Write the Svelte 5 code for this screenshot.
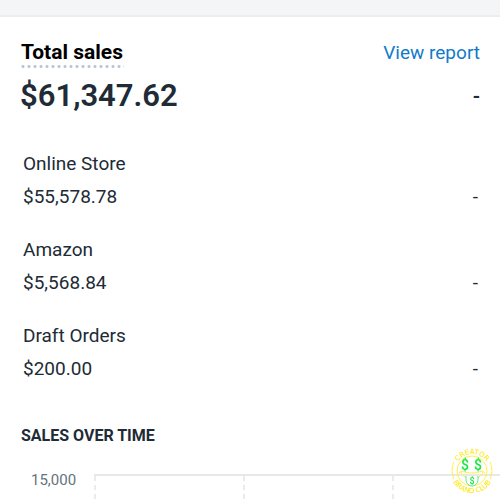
<script lang="ts">
  interface Channel {
    name: string;
    amount: string;
    change: string;
  }

  const total = '$61,347.62';

  const channels: Channel[] = [
    { name: 'Online Store', amount: '$55,578.78', change: '-' },
    { name: 'Amazon', amount: '$5,568.84', change: '-' },
    { name: 'Draft Orders', amount: '$200.00', change: '-' }
  ];
</script>

<div class="page">
  <main class="card">
    <header class="card-header">
      <h2>Total sales</h2>
      <a href="#report">View report</a>
    </header>

    <div class="total">
      <span>{total}</span>
      <span class="total-change">-</span>
    </div>

    <dl class="channels">
      {#each channels as channel (channel.name)}
        <div class="channel">
          <dt>{channel.name}</dt>
          <dd>
            <span>{channel.amount}</span>
            <span>{channel.change}</span>
          </dd>
        </div>
      {/each}
    </dl>

    <h3>Sales over time</h3>

    <div class="chart">
      <span class="axis-label">15,000</span>
      <div class="plot">
        <div class="column"></div>
        <div class="column"></div>
        <div class="column"></div>
      </div>
    </div>
  </main>

  <svg class="badge" viewBox="0 0 48 48" role="img" aria-label="Creator Brand Club">
    <defs>
      <path id="badge-top" d="M7 24a17 17 0 0 1 34 0" />
      <path id="badge-bottom" d="M2 24a22 22 0 0 0 44 0" />
    </defs>
    <g class="outline">
      <circle cx="24" cy="24" r="15" />
      <path d="M6 15a20 20 0 0 0 0 17M42 15a20 20 0 0 1 0 17" />
      <path d="M11 26q2 0 2-2q11 4 22 0q0 2 2 2M13 25c2 4 6 7 11 7s9-3 11-7" />
    </g>
    <path class="tongue" d="M18 29v4a6 6 0 0 0 12 0v-4" />
    <text class="eye" x="17" y="23">$</text>
    <text class="eye" x="30" y="23">$</text>
    <text class="tongue-text" x="24" y="37">$</text>
    <text class="ring"><textPath href="#badge-top" startOffset="50%">CREATOR</textPath></text>
    <text class="ring"><textPath href="#badge-bottom" startOffset="50%">BRAND CLUB</textPath></text>
  </svg>
</div>

<style>
  :global(body) {
    margin: 0;
    background: #fff;
  }

  .page {
    height: 100vh;
    overflow: hidden;
    color: #212b36;
    font-family: Roboto, 'Liberation Sans', sans-serif;
    font-size: 19px;
    line-height: 33px;
  }

  .page::before {
    content: '';
    display: block;
    height: 15px;
    background: #f4f5f7;
    border-bottom: 2px solid #ebeef0;
  }

  .card {
    padding: 20px 20px 0;
  }

  .card-header,
  .total,
  dd {
    display: flex;
    justify-content: space-between;
  }

  .card-header {
    align-items: flex-start;
  }

  h2 {
    margin: 0;
    padding: 2px 1px 3px;
    background: radial-gradient(circle, #b9c4d2 1px, transparent 2px) left bottom / 6px 3px repeat-x;
    color: #000;
    font-size: 21px;
    font-weight: 700;
    line-height: 26px;
  }

  a {
    color: #117bc9;
    line-height: 32px;
    text-decoration: none;
  }

  .total {
    font-size: 31px;
    font-weight: 600;
    line-height: 54px;
  }

  .total-change {
    font-size: 20px;
  }

  .channels {
    display: grid;
    gap: 20px;
    margin: 24px 0 0;
    padding: 0 2px 0 3px;
  }

  dd {
    margin: 0;
  }

  h3 {
    margin: 39px 0 0;
    padding: 0 1px;
    font-size: 16px;
    font-weight: 700;
    line-height: 24px;
    text-transform: uppercase;
  }

  .chart {
    display: flex;
    gap: 18px;
    height: 240px;
    margin: 26px -20px 0 0;
    padding-left: 11px;
  }

  .axis-label {
    color: #637381;
    font-size: 15px;
    line-height: 12px;
  }

  .plot {
    display: flex;
    flex: 1;
    border-top: 2px solid #e8e8e8;
  }

  .column {
    flex: 0 0 149px;
    background: repeating-linear-gradient(#ebebeb 0 5px, transparent 5px 9px) left / 2px 100% no-repeat;
  }

  .badge {
    position: fixed;
    right: 4px;
    bottom: 5px;
    width: 48px;
    height: 48px;
    font-family: Roboto, 'Liberation Sans', sans-serif;
    text-anchor: middle;
  }

  .outline {
    fill: none;
    stroke: #fff04a;
    stroke-width: 1;
  }

  .tongue {
    fill: #fff;
    stroke: #63ea86;
    stroke-width: 1;
  }

  .eye {
    fill: #16e83c;
    font-size: 14px;
    font-weight: 500;
  }

  .tongue-text {
    fill: #16e83c;
    font-size: 9px;
    font-weight: 500;
  }

  .ring {
    fill: #ffe600;
    font-family: 'DejaVu Sans', sans-serif;
    font-size: 7px;
  }
</style>
